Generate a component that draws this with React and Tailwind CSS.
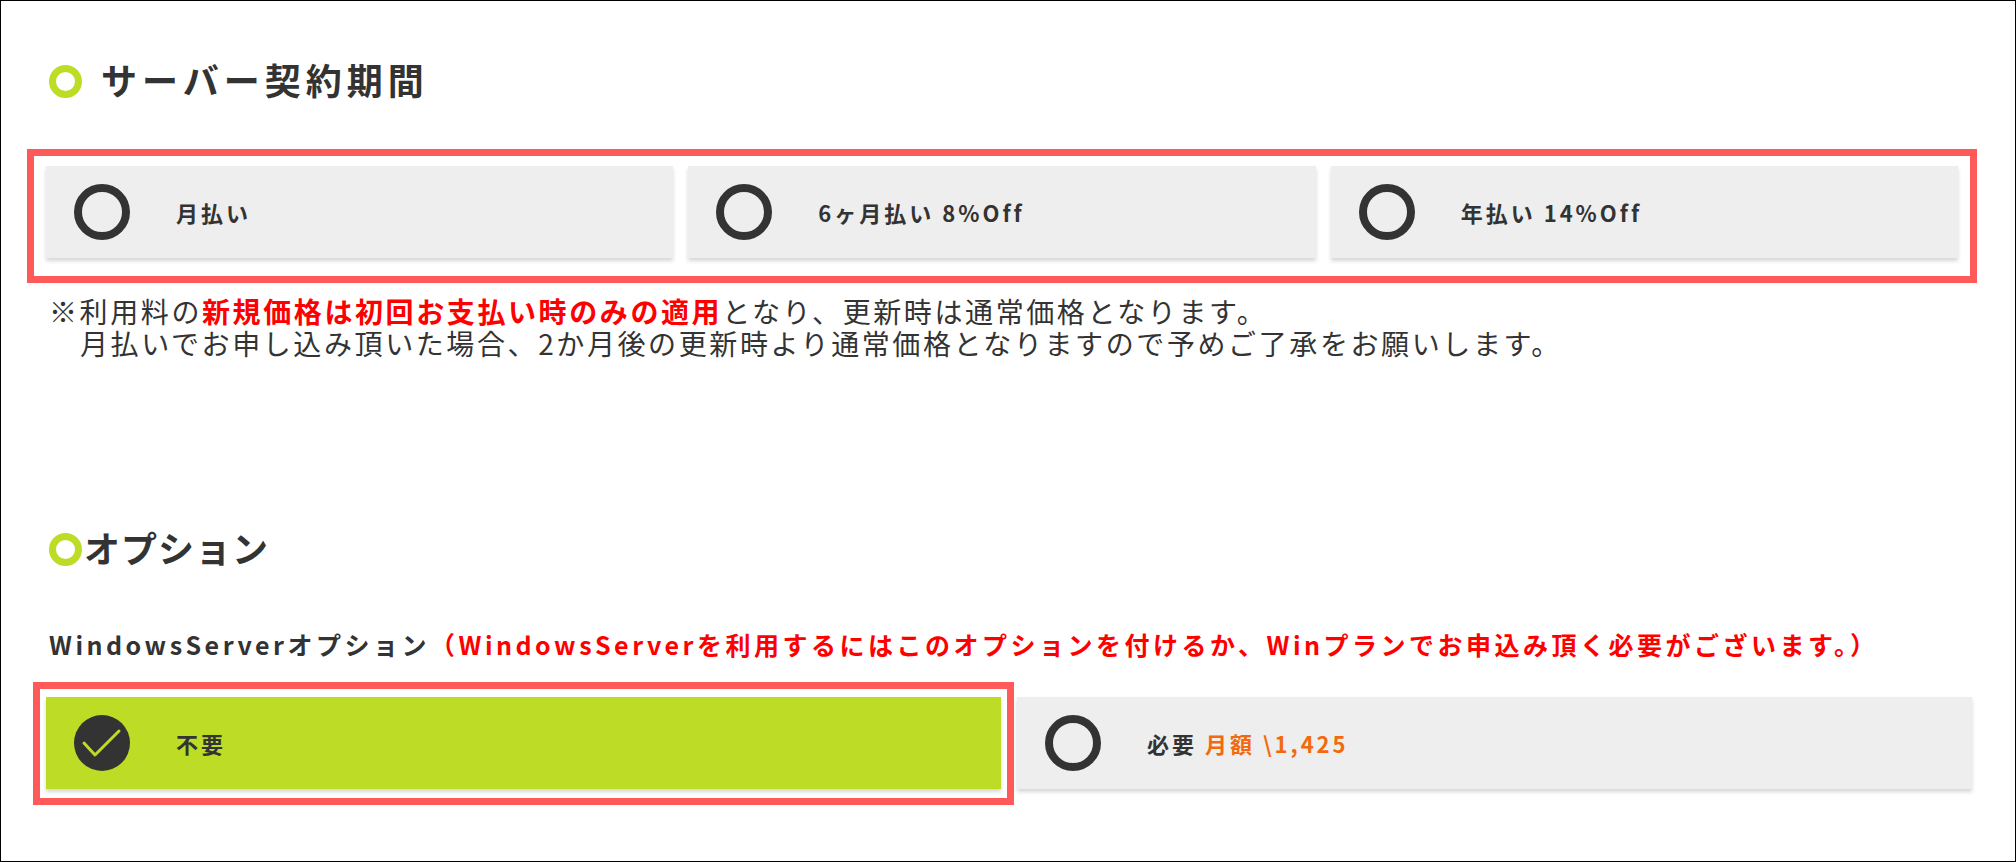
import React from "react";

const FONT = { fontFamily: '"Noto Sans CJK JP", "Noto Sans", sans-serif' };

function EmptyRadio() {
  return <div className="w-[56px] h-[56px] shrink-0 rounded-full border-[8px] border-[#333333]" />;
}

function CheckedRadio() {
  return (
    <div className="w-[56px] h-[56px] shrink-0 rounded-full bg-[#333333] flex items-center justify-center">
      <svg width="56" height="56" viewBox="0 0 56 56">
        <path d="M10 28 L21 40 L45 16" fill="none" stroke="#bcdc26" strokeWidth="3" strokeLinecap="round" strokeLinejoin="round" />
      </svg>
    </div>
  );
}

function Card({ children, selected = false, className = "" }) {
  return (
    <div
      className={`h-[92px] flex items-center pl-[28px] shadow-[0_3px_4px_rgba(0,0,0,0.16)] ${
        selected ? "bg-[#bcdc26]" : "bg-[#eeeeee]"
      } ${className}`}
    >
      {selected ? <CheckedRadio /> : <EmptyRadio />}
      <div className="ml-[46px] text-[22px] font-bold tracking-[3px] text-[#333333] leading-none whitespace-nowrap">
        {children}
      </div>
    </div>
  );
}

function Heading({ children, gap, tracking }) {
  return (
    <div className="flex items-center">
      <div className="w-[33px] h-[33px] rounded-full border-[7px] border-[#bcdc26] shrink-0 mt-[4px]" />
      <h2
        className={`text-[36px] font-bold leading-[43px] text-[#333333] ${gap} ${tracking}`}
      >
        {children}
      </h2>
    </div>
  );
}

export default function App() {
  return (
    <div style={FONT} className="w-[2016px] h-[862px] border border-black bg-white overflow-hidden">
      <div className="pt-[57px] pl-[48px]">
        <Heading gap="ml-[19px]" tracking="tracking-[5px]">サーバー契約期間</Heading>
      </div>

      <div className="mt-[48px] ml-[26px] w-[1950px] border-[7px] border-[#ff5a5a] pt-[10px] pb-[18px] px-[12px]">
        <div className="grid grid-cols-3 gap-[15px]">
          <Card>月払い</Card>
          <Card>6ヶ月払い 8%Off</Card>
          <Card>年払い 14%Off</Card>
        </div>
      </div>

      <div className="mt-[12px] ml-[48px] text-[28px] leading-[32px] tracking-[2.6px] text-[#333333]">
        <p>
          ※利用料の<span className="text-[#ff0000] font-bold">新規価格は初回お支払い時のみの適用</span>となり、更新時は通常価格となります。
        </p>
        <p className="pl-[31px]">
          月払いでお申し込み頂いた場合、2か月後の更新時より通常価格となりますので予めご了承をお願いします。
        </p>
      </div>

      <div className="mt-[167px] pl-[48px]">
        <Heading gap="ml-[2px]" tracking="tracking-[1px]">オプション</Heading>
      </div>

      <div className="mt-[59px] ml-[48px] text-[25px] leading-[32px] tracking-[3.5px] font-bold text-[#333333] whitespace-nowrap">
        WindowsServerオプション
        <span className="text-[#ff0000]">（WindowsServerを利用するにはこのオプションを付けるか、Winプランでお申込み頂く必要がございます。）</span>
      </div>

      <div className="mt-[22px] ml-[32px] flex items-start">
        <div className="w-[981px] border-[7px] border-[#ff5a5a] pt-[8px] pb-[9px] px-[6px]">
          <Card selected>不要</Card>
        </div>
        <Card className="ml-[3px] mt-[15px] w-[955px]">
          必要 <span className="text-[#f26a0d]">月額 \1,425</span>
        </Card>
      </div>
    </div>
  );
}
